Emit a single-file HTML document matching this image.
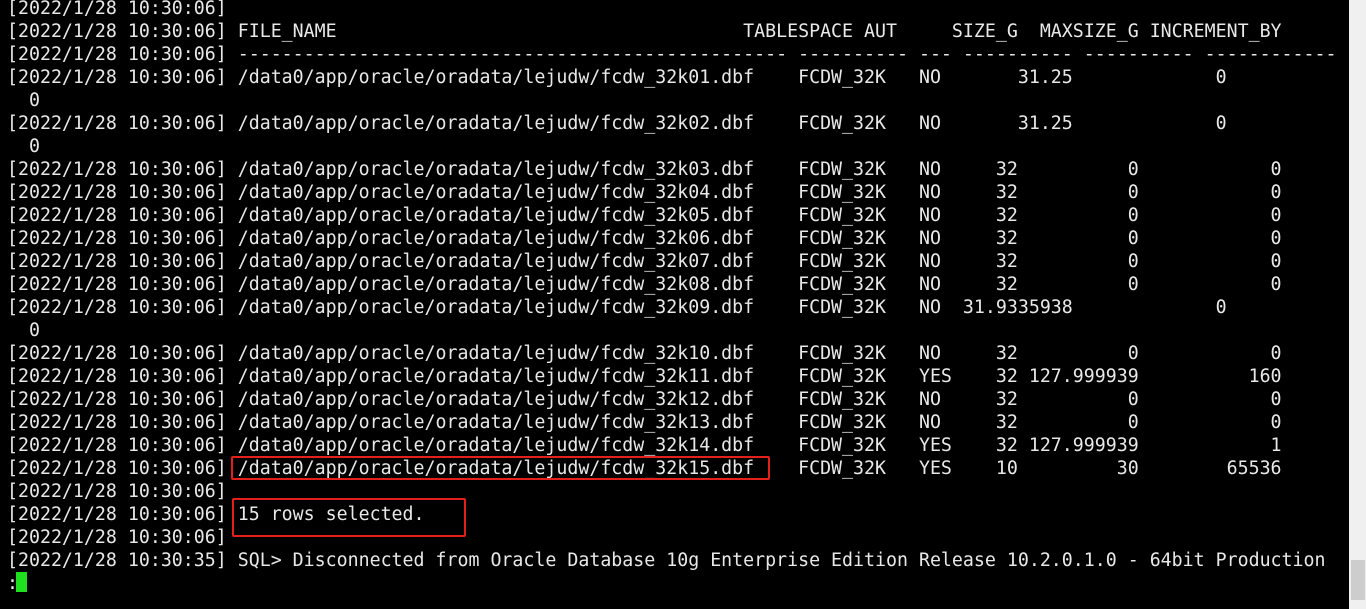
<!DOCTYPE html>
<html><head><meta charset="utf-8"><style>
html,body{margin:0;padding:0;background:#000;width:1366px;height:609px;overflow:hidden}
pre{position:absolute;left:7px;top:-3px;margin:0;font-family:"DejaVu Sans Mono","Liberation Mono",monospace;font-size:18.25px;line-height:23px;color:#e8e8e8;white-space:pre}
.box{position:absolute;border:2px solid #e3201c;border-radius:2px}
.sb{position:absolute;left:1349px;top:0;width:17px;height:609px;background:#f0f0f0}
.th{position:absolute;left:1351px;top:560px;width:14px;height:40px;background:#cdcdcd}
.cur{position:absolute;left:16px;top:572px;width:11px;height:20px;background:#1ee01e}
</style></head><body>
<pre>[2022/1/28 10:30:06]
[2022/1/28 10:30:06] FILE_NAME                                     TABLESPACE AUT     SIZE_G  MAXSIZE_G INCREMENT_BY
[2022/1/28 10:30:06] -------------------------------------------------- ---------- --- ---------- ---------- ------------
[2022/1/28 10:30:06] /data0/app/oracle/oradata/lejudw/fcdw_32k01.dbf    FCDW_32K   NO       31.25             0
  0
[2022/1/28 10:30:06] /data0/app/oracle/oradata/lejudw/fcdw_32k02.dbf    FCDW_32K   NO       31.25             0
  0
[2022/1/28 10:30:06] /data0/app/oracle/oradata/lejudw/fcdw_32k03.dbf    FCDW_32K   NO     32          0            0
[2022/1/28 10:30:06] /data0/app/oracle/oradata/lejudw/fcdw_32k04.dbf    FCDW_32K   NO     32          0            0
[2022/1/28 10:30:06] /data0/app/oracle/oradata/lejudw/fcdw_32k05.dbf    FCDW_32K   NO     32          0            0
[2022/1/28 10:30:06] /data0/app/oracle/oradata/lejudw/fcdw_32k06.dbf    FCDW_32K   NO     32          0            0
[2022/1/28 10:30:06] /data0/app/oracle/oradata/lejudw/fcdw_32k07.dbf    FCDW_32K   NO     32          0            0
[2022/1/28 10:30:06] /data0/app/oracle/oradata/lejudw/fcdw_32k08.dbf    FCDW_32K   NO     32          0            0
[2022/1/28 10:30:06] /data0/app/oracle/oradata/lejudw/fcdw_32k09.dbf    FCDW_32K   NO  31.9335938             0
  0
[2022/1/28 10:30:06] /data0/app/oracle/oradata/lejudw/fcdw_32k10.dbf    FCDW_32K   NO     32          0            0
[2022/1/28 10:30:06] /data0/app/oracle/oradata/lejudw/fcdw_32k11.dbf    FCDW_32K   YES    32 127.999939          160
[2022/1/28 10:30:06] /data0/app/oracle/oradata/lejudw/fcdw_32k12.dbf    FCDW_32K   NO     32          0            0
[2022/1/28 10:30:06] /data0/app/oracle/oradata/lejudw/fcdw_32k13.dbf    FCDW_32K   NO     32          0            0
[2022/1/28 10:30:06] /data0/app/oracle/oradata/lejudw/fcdw_32k14.dbf    FCDW_32K   YES    32 127.999939            1
[2022/1/28 10:30:06] /data0/app/oracle/oradata/lejudw/fcdw_32k15.dbf    FCDW_32K   YES    10         30        65536
[2022/1/28 10:30:06]
[2022/1/28 10:30:06] 15 rows selected.
[2022/1/28 10:30:06]
[2022/1/28 10:30:35] SQL> Disconnected from Oracle Database 10g Enterprise Edition Release 10.2.0.1.0 - 64bit Production
:</pre>
<div class="cur"></div>
<div class="box" style="left:231px;top:456px;width:535px;height:20px"></div>
<div class="box" style="left:232px;top:498px;width:230px;height:35px"></div>
<div class="sb"></div><div class="th"></div>
</body></html>
